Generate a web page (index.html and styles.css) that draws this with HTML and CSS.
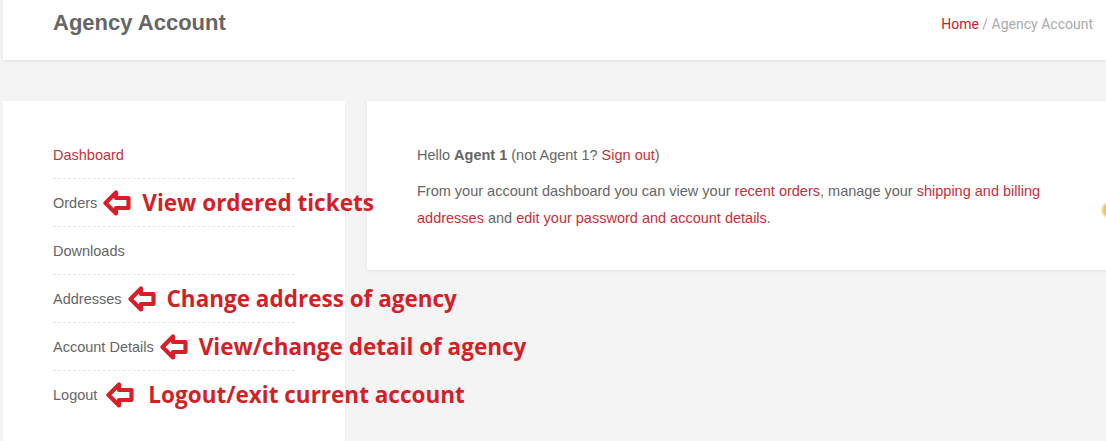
FILE: index.html
```html
<!DOCTYPE html>
<html lang="en">
<head>
<meta charset="utf-8">
<title>Agency Account</title>
<link rel="stylesheet" href="styles.css">
</head>
<body>
<div class="page">
  <header class="topbar">
    <h1 class="title">Agency Account</h1>
    <nav class="crumbs"><a href="#" class="crumb-link">Home</a> / Agency Account</nav>
  </header>

  <div class="content">
    <aside class="side">
      <ul class="menu">
        <li class="menu-item"><a href="#" class="menu-link active">Dashboard</a></li>
        <li class="menu-item"><a href="#" class="menu-link">Orders</a>
          <span class="note">
            <svg class="arrow" viewBox="0 0 28 26" width="28" height="26"><path d="M2.5 13 L13 2.5 L13 8 L25.5 8 L25.5 18 L13 18 L13 23.5 Z"/></svg>
            <span class="note-text">View ordered tickets</span>
          </span>
        </li>
        <li class="menu-item"><a href="#" class="menu-link">Downloads</a></li>
        <li class="menu-item"><a href="#" class="menu-link">Addresses</a>
          <span class="note">
            <svg class="arrow" viewBox="0 0 28 26" width="28" height="26"><path d="M2.5 13 L13 2.5 L13 8 L25.5 8 L25.5 18 L13 18 L13 23.5 Z"/></svg>
            <span class="note-text">Change address of agency</span>
          </span>
        </li>
        <li class="menu-item"><a href="#" class="menu-link">Account Details</a>
          <span class="note">
            <svg class="arrow" viewBox="0 0 28 26" width="28" height="26"><path d="M2.5 13 L13 2.5 L13 8 L25.5 8 L25.5 18 L13 18 L13 23.5 Z"/></svg>
            <span class="note-text">View/change detail of agency</span>
          </span>
        </li>
        <li class="menu-item"><a href="#" class="menu-link">Logout</a>
          <span class="note note-wide">
            <svg class="arrow" viewBox="0 0 28 26" width="28" height="26"><path d="M2.5 13 L13 2.5 L13 8 L25.5 8 L25.5 18 L13 18 L13 23.5 Z"/></svg>
            <span class="note-text">Logout/exit current account</span>
          </span>
        </li>
      </ul>
    </aside>

    <main class="panel">
      <p class="hello">Hello <strong>Agent 1</strong> (not Agent 1? <a href="#" class="link">Sign out</a>)</p>
      <p class="intro">From your account dashboard you can view your <a href="#" class="link">recent orders</a>, manage your <a href="#" class="link">shipping and billing addresses</a> and <a href="#" class="link">edit your password and account details</a>.</p>
    </main>
  </div>
  <span class="float-dot"></span>
</div>
</body>
</html>
```

FILE: styles.css
```css
html, body {
  margin: 0;
  padding: 0;
}
body {
  background: #f4f4f4;
  font-family: "Liberation Sans", Arial, sans-serif;
  color: #666;
  overflow: hidden;
  height: 441px;
}
.page {
  padding-left: 3px;
}
.topbar {
  background: #fff;
  height: 60px;
  box-sizing: border-box;
  padding: 10px 13px 0 50px;
  display: flex;
  justify-content: space-between;
  align-items: flex-start;
  box-shadow: 0 1px 3px rgba(0, 0, 0, 0.09);
  position: relative;
}
.title {
  margin: 0;
  font-size: 22px;
  line-height: 26px;
  font-weight: 700;
  color: #666;
}
.crumbs {
  font-family: Roboto, "Liberation Sans", sans-serif;
  font-size: 14px;
  line-height: 20px;
  padding-top: 4px;
  color: #aaa;
}
.crumb-link {
  color: #c8202f;
  text-decoration: none;
}
.content {
  display: flex;
  gap: 22px;
  padding-top: 41px;
  margin-right: -40px;
  align-items: flex-start;
}
.side {
  width: 342px;
  flex: 0 0 342px;
  box-sizing: border-box;
  background: #fff;
  padding: 30px 50px 80px;
  box-shadow: 0 1px 2px rgba(0, 0, 0, 0.05);
}
.menu {
  list-style: none;
  margin: 0;
  padding: 0;
}
.menu-item {
  height: 47px;
  border-bottom: 1px dashed #e6e6e6;
  display: flex;
  align-items: center;
  white-space: nowrap;
}
.menu-item:last-child {
  border-bottom: none;
}
.menu-link {
  font-size: 14.5px;
  color: #666;
  text-decoration: none;
}
.menu-link.active {
  color: #c6303a;
}
.note {
  display: flex;
  align-items: center;
  gap: 11px;
  margin-left: 6px;
  position: relative;
  z-index: 2;
}
.note-wide {
  margin-left: 9px;
  gap: 14px;
}
.arrow {
  display: block;
  fill: #fff;
  stroke: #d81e28;
  stroke-width: 4.2;
  stroke-linejoin: round;
}
.note-text {
  font-family: "Open Sans", "Liberation Sans", sans-serif;
  font-weight: 700;
  font-size: 22.5px;
  line-height: 28px;
  color: #d41f27;
}
.panel {
  flex: 1;
  background: #fff;
  box-sizing: border-box;
  padding: 41px 50px 38px;
  box-shadow: 0 1px 3px rgba(0, 0, 0, 0.08);
}
.hello {
  margin: 0 0 9px;
  font-size: 14.5px;
  line-height: 27px;
}
.hello strong {
  color: #666;
}
.intro {
  margin: 0;
  font-size: 14.5px;
  line-height: 27px;
  max-width: 660px;
}
.link {
  color: #c6303a;
  text-decoration: none;
}
.float-dot {
  position: absolute;
  left: 1102px;
  top: 203px;
  width: 12px;
  height: 14px;
  border-radius: 50%;
  background: #f6c14a;
  filter: blur(1px);
}
```
